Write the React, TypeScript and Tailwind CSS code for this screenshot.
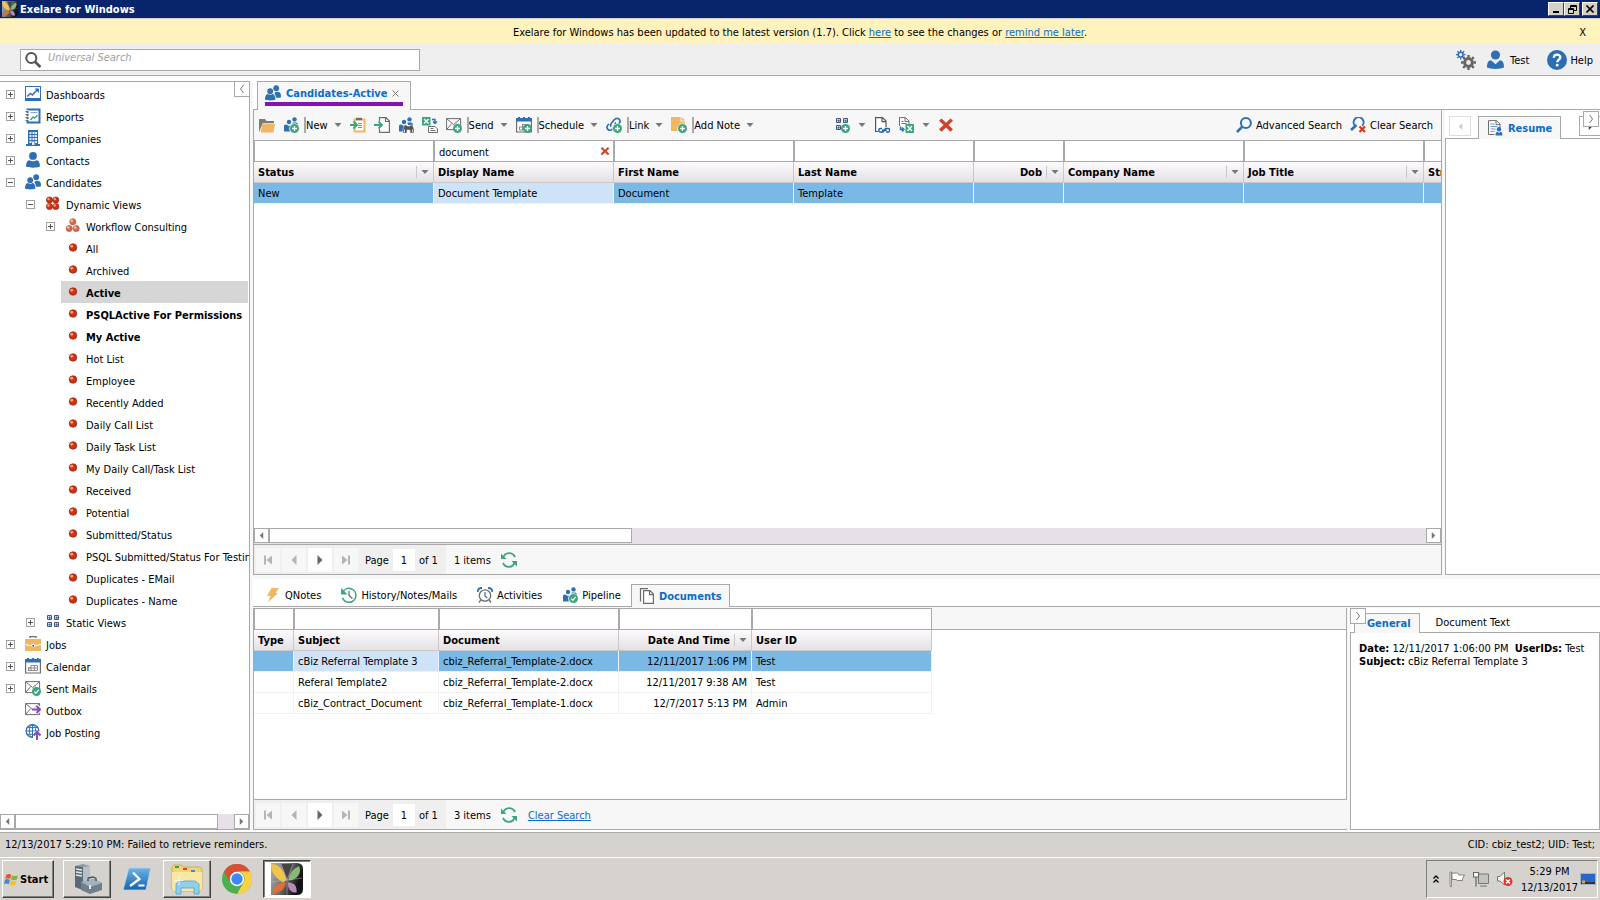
import { useState } from "react";
import type { ReactNode } from "react";
import clsx from "clsx";

const BLUE = "#2f6fb3";
const GREEN = "#3ba57c";
const GRAY = "#6d6d6d";
const ORANGE = "#f0b763";
const PURPLE = "#8a4bab";

const Svg = ({ children, className = "size-4", box = "0 0 16 16" }: { children: ReactNode; className?: string; box?: string }) => (
  <svg viewBox={box} className={clsx("shrink-0", className)} fill="none" aria-hidden="true">
    {children}
  </svg>
);

// small green badge used by the "add" icons
const PlusBadge = () => (
  <>
    <circle cx="11.5" cy="11.5" r="4.5" fill={GREEN} />
    <path d="M11.5 9v5M9 11.5h5" stroke="#fff" strokeWidth="1.3" />
  </>
);

const CheckBadge = () => (
  <>
    <circle cx="11.5" cy="11.5" r="4.5" fill={GREEN} />
    <path d="M9.3 11.6l1.6 1.7 2.8-3.4" stroke="#fff" strokeWidth="1.3" />
  </>
);

const People = ({ className }: { className?: string }) => (
  <Svg className={className}>
    <circle cx="11.2" cy="3.2" r="2.9" fill={BLUE} />
    <path d="M9.5 8.2c.6-1.6 4-1.8 5.3-.6 1 .9 1.2 2.4 1.2 4.6-1.5.7-3.5.7-5 .4-.2-1.8-.8-3-1.5-4.4z" fill={BLUE} />
    <circle cx="5.2" cy="6.2" r="2.9" fill={BLUE} />
    <path d="M0 14.6c0-3.4 1-5.3 2.6-5.6 1.6 1.1 3.6 1.1 5.2 0C9.4 9.3 10.4 11.2 10.4 14.6 8 15.8 2.4 15.8 0 14.6z" fill={BLUE} />
  </Svg>
);

const SmallPeople = () => (
  <>
    <circle cx="11.5" cy="2.4" r="2.2" fill={BLUE} />
    <circle cx="6" cy="5" r="2.2" fill={BLUE} />
    <path d="M9.5 5.6h3.5c1.3.2 2 .9 2 2.4H9.9zM1 14.5V9.9c.2-1.5 1-2.2 2.2-2.2L6 9l1.5-.8v6.3z" fill={BLUE} />
    <circle cx="2.9" cy="9.5" r="1.9" fill={BLUE} />
  </>
);

const PeoplePlus = () => (
  <Svg>
    <SmallPeople />
    <circle cx="11.5" cy="11.5" r="5.3" fill="#f7f7f7" />
    <PlusBadge />
  </Svg>
);

const Pipeline = () => (
  <Svg>
    <SmallPeople />
    <circle cx="11.5" cy="11.5" r="5.3" fill="#fff" />
    <CheckBadge />
  </Svg>
);

const PeopleFind = () => (
  <Svg>
    <SmallPeople />
    <path d="M5 16v-4l1.5-4h2.5v1h3V8h2.5L16 12v4h-4v-3H9v3z" fill="#555" stroke="#f7f7f7" strokeWidth=".5" />
    <path d="M6.5 12.5v2.5M14.5 12.5v2.5" stroke="#ddd" />
  </Svg>
);

const Dashboard = () => (
  <Svg>
    <rect x=".5" y=".5" width="15" height="14" stroke={BLUE} />
    <path d="M0 13.5h16" stroke={BLUE} strokeWidth="3" />
    <path d="M2 10.5l3.5-3 2 1.5 5-5.5" stroke={BLUE} strokeWidth="1.5" />
    <path d="M9.5 2.5H14V7z" fill={BLUE} />
  </Svg>
);

const Report = () => (
  <Svg>
    <path d="M2.5 1.5h12v13h-12z" stroke={BLUE} strokeWidth="2" />
    <path d="M1 3h3M1 6h3M1 9h3M1 12h3" stroke="#fff" strokeWidth="1.5" />
    <path d="M.5 3.5h3M.5 6.5h3M.5 9.5h3M.5 12.5h3" stroke={GRAY} />
    <path d="M5.5 4.5h7" stroke="#8aa9cc" />
    <path d="M5.5 12l2.5-3 1.5 1 3-3" stroke={GREEN} strokeWidth="1.4" />
  </Svg>
);

const Building = () => (
  <Svg>
    <path d="M3 0h10v14h2v2H1v-2h2z" fill={BLUE} />
    <path d="M4.5 2h2v2h-2zM7.5 2h2v2h-2zM10 2h2v2h-2zM4.5 5h2v2h-2zM7.5 5h2v2h-2zM10 5h2v2h-2zM4.5 8h2v2h-2zM7.5 8h2v2h-2zM10 8h2v2h-2zM4.5 11h2v2h-2zM7 11.5h2.5V15H7zM10 11h2v2h-2z" fill="#e6eef8" />
  </Svg>
);

const Person = ({ className }: { className?: string }) => (
  <Svg className={className}>
    <circle cx="8" cy="3.9" r="3.9" fill={BLUE} />
    <path d="M1 14.5c0-3.5 1-6 3.3-6.3C6.5 9.6 9.5 9.6 11.7 8.2 14 8.5 15 11 15 14.5c-3 1.6-11 1.6-14 0z" fill={BLUE} />
  </Svg>
);

const User = () => (
  <Svg className="h-5 w-[17px]" box="0 0 17 20">
    <circle cx="8.5" cy="5" r="4.6" fill={BLUE} />
    <path d="M0 17.5C0 12.5 1.5 10.5 4 10.3l4.5 4 4.5-4c2.5.2 4 2.2 4 7.2-3.5 1.9-13.5 1.9-17 0z" fill={BLUE} />
  </Svg>
);

const Ball = ({ x, y, r, soft }: { x: number; y: number; r: number; soft?: boolean }) => (
  <>
    <circle cx={x} cy={y} r={r} fill={soft ? "#d9694c" : "#d2300f"} stroke={soft ? "#a8503c" : "#7d1f10"} strokeWidth=".6" />
    <circle cx={x - r / 3} cy={y - r / 3} r={r / 2.6} fill={soft ? "#f6c4b4" : "#ff9c80"} />
  </>
);

const Dynamic = () => (
  <Svg>
    <Ball x={4.5} y={4} r={3.1} />
    <Ball x={10.8} y={4} r={3.1} />
    <Ball x={4.5} y={10.5} r={3.1} />
    <Ball x={10.8} y={10.5} r={3.1} />
  </Svg>
);

const Workflow = () => (
  <Svg>
    <Ball x={7.8} y={3.8} r={3.1} soft />
    <Ball x={4.2} y={10.5} r={3.1} soft />
    <Ball x={11.2} y={10.5} r={3.1} soft />
  </Svg>
);

const Leaf = () => (
  <Svg>
    <Ball x={8} y={7.5} r={3.8} />
  </Svg>
);

const Squares = () => (
  <>
    <path d="M2.5 1.5h4v4h-4zM9.5 1.5h4v4h-4zM2.5 8.5h4v4h-4zM9.5 8.5h4v4h-4z" fill="#fff" stroke="#4b5563" />
    <path d="M3.8 2.8h1.6v1.6H3.8zM10.8 2.8h1.6v1.6h-1.6zM3.8 9.8h1.6v1.6H3.8zM10.8 9.8h1.6v1.6h-1.6z" fill="#2563d8" stroke="#2563d8" strokeWidth=".5" />
  </>
);

const Static = () => (
  <Svg>
    <Squares />
  </Svg>
);

const SquaresPlus = () => (
  <Svg>
    <Squares />
    <PlusBadge />
  </Svg>
);

const Briefcase = () => (
  <Svg>
    <path d="M5 2V.7h6V2" stroke={GRAY} strokeWidth="1.3" />
    <path d="M0 3h16v12H0z" fill={ORANGE} />
    <path d="M0 8.5l5.5 1h5l5.5-1" stroke="#fff" />
    <path d="M6.5 8h3v3h-3z" fill="#fff" />
    <path d="M7.5 9h1.5v1.5H7.5z" fill="#333" />
  </Svg>
);

const CalendarBody = () => (
  <>
    <path d="M.6 3v12h14.8V3" fill="#fff" stroke={GRAY} strokeWidth="1.2" />
    <path d="M0 1h2V0h2v1h3V0h2v1h3V0h2v1h2v3.5H0z" fill={BLUE} />
  </>
);

const Calendar = () => (
  <Svg>
    <CalendarBody />
    <path d="M3 10h3M3 12.5h9.5V7.5H6v5M9.3 7.5v5M3.5 10v2.5M3 10h9.5" stroke="#8a8a8a" />
  </Svg>
);

const Schedule = () => (
  <Svg>
    <CalendarBody />
    <path d="M3 10h9M3.5 13h4M3.5 10v3M6.5 7.5V13M6 7.5h6" stroke="#8a8a8a" />
    <PlusBadge />
  </Svg>
);

const EnvelopeBody = () => (
  <path d="M.6 1.6h14v11H.6zM.6 1.6l7 6 7-6M.6 12.6l5-6M14.6 12.6l-4.5-6" fill="#fff" stroke={GRAY} />
);

const SentMail = () => (
  <Svg>
    <EnvelopeBody />
    <CheckBadge />
  </Svg>
);

const MailPlus = () => (
  <Svg>
    <EnvelopeBody />
    <PlusBadge />
  </Svg>
);

const Outbox = () => (
  <Svg>
    <EnvelopeBody />
    <path d="M7 7.5h8M11.5 4l3.5 3.5-3.5 3.5" stroke="#fff" strokeWidth="4" />
    <path d="M7 7.5h8M11.5 4l3.5 3.5-3.5 3.5" stroke={PURPLE} strokeWidth="2" />
  </Svg>
);

const JobPosting = () => (
  <Svg>
    <circle cx="7.5" cy="7" r="6.4" stroke={BLUE} strokeWidth="1.3" />
    <path d="M7.5.6v13M1 7h13M2 3.6h11M2 10.3h11" stroke={BLUE} />
    <ellipse cx="7.5" cy="7" rx="3.2" ry="6.4" stroke={BLUE} />
    <path d="M8 7.5h8V16H8z" fill="#fff" />
    <path d="M12 16V8M8.5 11.5L12 8l3.5 3.5" stroke={PURPLE} strokeWidth="2" />
  </Svg>
);

const Folder = () => (
  <Svg>
    <path d="M0 15V2h6l1.5 2H15v2H4z" fill="#7b7b7b" />
    <path d="M3.500 6.500H16l-1.500 9H1.500z" fill={ORANGE} />
  </Svg>
);

const ClipboardIn = () => (
  <Svg>
    <path d="M3.5 1.5h12v14h-12z" fill={ORANGE} />
    <path d="M5.5 3.5h8v10h-8z" fill="#fff" />
    <path d="M6 .8h6v2.4H6z" fill={GRAY} />
    <path d="M8 6.5h4M8 8.5h4M8 10.5h4" stroke="#8a8a8a" />
    <path d="M0 8h6M3.5 4.5L7 8l-3.5 3.5" stroke={GREEN} strokeWidth="1.8" />
  </Svg>
);

const DocIn = () => (
  <Svg>
    <path d="M5.5 4V.6H12L15.4 4v11.4H5.5V12M11.5.6V4.5h3.9" fill="#fff" stroke={GRAY} strokeWidth="1.2" />
    <path d="M0 8h7M4.5 4.5L8 8l-3.5 3.5" stroke={GREEN} strokeWidth="1.8" />
  </Svg>
);

const ExcelExport = () => (
  <Svg>
    <path d="M0 0h8.500v8.500H0z" fill={GREEN} />
    <path d="M2 2l4.500 4.500M6.500 2L2 6.500" stroke="#fff" strokeWidth="1.4" />
    <path d="M10 2.500h3v3.500M11 4.500l2 2 2-2" stroke={BLUE} strokeWidth="1.4" />
    <path d="M6.500 15.500V9.500H13l2.500 2.500v3.500zM8.500 11.500h3M8.500 13.500h5" fill="#fff" stroke={GRAY} />
  </Svg>
);

const LinkPlus = () => (
  <Svg>
    <path d="M5 9.5c-1-1.8 0-3 1-4l2-2.5C10 .6 12.5 1 13.5 2.5s.5 3-.5 4l-1 1M9 5.5c1 1.5.5 3-.5 4L6.5 12C5 13.8 2.5 13.5 1.5 12s-.5-3 .5-4l1-1" stroke={BLUE} strokeWidth="1.7" />
    <circle cx="11.5" cy="11.5" r="5.2" fill="#f7f7f7" />
    <PlusBadge />
  </Svg>
);

const NotePlus = () => (
  <Svg>
    <path d="M0 0h9.500v4.500H14V14H0z" fill={ORANGE} />
    <path d="M10.500 0L14 3.500h-3.500z" fill={ORANGE} />
    <circle cx="11.500" cy="11.500" r="5.200" fill="#f7f7f7" />
    <PlusBadge />
  </Svg>
);

const DocLink = () => (
  <Svg>
    <path d="M4 14.5H1.6V.6h6.9L12 4v6M8 .6v4h4" fill="#fff" stroke="#555" strokeWidth="1.2" />
    <path d="M8 11.5H6.5a1.7 1.7 0 000 3.5H9l2.5-3.5H14a1.7 1.7 0 010 3.5h-2M8 13.3h4.5" stroke="#1c5fa8" strokeWidth="1.4" />
  </Svg>
);

const DocExcel = () => (
  <Svg>
    <path d="M1.5 9V.6h6L11 4v3M7 .6v4h4M3.5 4.5h2M3.5 6.5h5" fill="#fff" stroke={GRAY} />
    <path d="M2.5 9.5v3H5M4 10.5l2 2-2 2" stroke={BLUE} strokeWidth="1.4" />
    <path d="M7.5 7H16v9H7.5z" fill={GREEN} />
    <path d="M9.5 9l4.5 5M14 9l-4.5 5" stroke="#fff" strokeWidth="1.5" />
  </Svg>
);

const RedX = ({ className = "size-4" }: { className?: string }) => (
  <Svg className={className}>
    <path d="M3.5 1.5L8 5.8l4.5-4.3L15 3.8 10.500 8l4.500 4.300-2.500 2.500L8 10.400l-4.500 4.400L1 12.300 5.500 8 1 3.800z" fill="#d0432b" />
  </Svg>
);

const SearchBlue = () => (
  <Svg>
    <circle cx="9.9" cy="6" r="5" stroke={BLUE} strokeWidth="2" />
    <path d="M6.3 9.7L1 15" stroke={BLUE} strokeWidth="2.6" />
  </Svg>
);

const ClearSearch = () => (
  <Svg>
    <path d="M5 8.800A5 5 0 1112.200 8.800" stroke={BLUE} strokeWidth="2" />
    <path d="M6.500 8L1 13" stroke={BLUE} strokeWidth="2.600" />
    <path d="M9.500 9.500l5.500 5.500M15 9.500L9.500 15" stroke="#cf3c25" strokeWidth="2.200" />
  </Svg>
);

const Resume = () => (
  <Svg>
    <path d="M1.5.6h8L13 4v4M9 .6v4h4M1.5.6v13.9h6" fill="#fff" stroke={GRAY} />
    <path d="M3.5 4h4M3.5 6.5h7M3.5 9h5M3.5 11.500h4" stroke="#6f9ed0" strokeWidth="1.2" />
    <circle cx="12" cy="9.2" r="2.2" fill={BLUE} />
    <path d="M8.5 15.500c0-2.500.8-3.700 2-3.800L12 13l1.500-1.300c1.200.1 2 1.300 2 3.800z" fill={BLUE} />
  </Svg>
);

const Bolt = () => (
  <Svg>
    <path d="M6.500 1H14l-3.500 5H13L3 15.500l2.500-6.500H2z" fill={ORANGE} />
  </Svg>
);

const History = () => (
  <Svg>
    <path d="M1.8 5.2A6.9 6.9 0 118 15.2a7 7 0 01-6.5-4.5" stroke={GREEN} strokeWidth="1.6" />
    <path d="M0 1v6.5h6.5z" fill={GREEN} />
    <path d="M8 4v4.5l3.5 3" stroke={GRAY} strokeWidth="1.3" />
  </Svg>
);

const Alarm = () => (
  <Svg>
    <circle cx="8" cy="8.5" r="5.7" stroke={GRAY} strokeWidth="1.3" fill="#fff" />
    <path d="M8 5v4l2.2 2.2" stroke={BLUE} strokeWidth="1.2" />
    <path d="M3.8 13L2 15.5M12.2 13l1.800 2.500" stroke={GRAY} strokeWidth="1.3" />
    <path d="M.7 5C.5 2.500 2.300.9 5 1M15.300 5C15.500 2.500 13.700.9 11 1" stroke={BLUE} strokeWidth="1.8" />
  </Svg>
);

const Docs = () => (
  <Svg>
    <path d="M1.5 13.5V.6H9" stroke={GRAY} strokeWidth="1.2" />
    <path d="M4.6 15.4V2.6H11l3.400 3.400v9.400zM10.500 2.600v4h3.900" fill="#fff" stroke={GRAY} strokeWidth="1.2" />
  </Svg>
);

const Refresh = () => (
  <Svg>
    <path d="M2 6.5C2.8 3 5.3 1.2 8 1.2c2.8 0 5 1.500 6 4M14 9.500c-.8 3.500-3.300 5.300-6 5.300-2.800 0-5-1.500-6-4" stroke={GREEN} strokeWidth="1.8" />
    <path d="M0 1.5V7h5.500zM16 14.500V9h-5.500z" fill={GREEN} />
  </Svg>
);

const Gears = () => (
  <Svg className="size-5" box="0 0 20 20">
    <circle cx="12.5" cy="12.5" r="3.9" stroke="#666" strokeWidth="3" />
    <path d="M12.5 5v2.5M12.5 17.5V20M5 12.5h2.5M17.5 12.5H20M7.2 7.2L9 9M16 16l1.8 1.8M7.2 17.8L9 16M16 9l1.8-1.8" stroke="#666" strokeWidth="2.4" />
    <circle cx="4.7" cy="4.7" r="2.4" stroke={BLUE} strokeWidth="1.5" />
    <path d="M4.7 0v2M4.7 7.5v2M0 4.7h2M7.5 4.7h2M1.3 1.3l1.2 1.2M6.9 6.9l1.2 1.2M1.3 8.1l1.2-1.2M6.9 2.5l1.2-1.2" stroke={BLUE} strokeWidth="1.3" />
  </Svg>
);

const Help = () => (
  <Svg className="size-5" box="0 0 20 20">
    <circle cx="10" cy="10" r="10" fill="#2b6fb2" />
    <path d="M6.8 7.8C6.8 3.6 13.4 3.8 13.4 7.3 13.4 9.6 10.2 9.6 10.2 12.3" stroke="#fff" strokeWidth="2.3" />
    <circle cx="10.2" cy="15.2" r="1.4" fill="#fff" />
  </Svg>
);

const Butterfly = ({ className }: { className?: string }) => (
  <Svg className={className} box="0 0 32 32">
    <defs>
      <linearGradient id="bfly" x1="0" y1=".3" x2="1" y2=".7">
        <stop offset="0" stopColor="#a8a8a8" />
        <stop offset=".45" stopColor="#6b6b6b" />
        <stop offset=".85" stopColor="#141414" />
      </linearGradient>
    </defs>
    <path d="M0 0h26q6 0 6 6v20q0 6-6 6H0z" fill="url(#bfly)" />
    <path d="M10 1h12l-5.500 15z" fill="#444" />
    <path d="M0 1c8 0 13 6 15.500 16L12 19.500C4 15 0 9 0 1z" fill="#efc64a" />
    <path d="M28 3c3 6-1 14-10.500 14.500C18 10 22 6 28 3z" fill="#86b877" />
    <path d="M14.500 19c.5 6-5 11-13.500 12C2 25 7 19 14.500 19z" fill="#dc7038" />
    <path d="M17 19.500c5-.5 9.500 3 8.500 10-5 .5-9-3-8.500-10z" fill="#b88abb" />
    <path d="M10 1l6 16 6-16M16 17v15M16 17l15-2M16 17L0 19" stroke="#bdbdbd" strokeWidth=".5" />
  </Svg>
);

const WindowsFlag = () => (
  <Svg className="size-[15px]">
    <path d="M2.5 3C4.5 1.6 6 2 7.7 3L6.5 7.5C5 6.5 3.2 6.2 1.3 7.5z" fill="#e8532b" />
    <path d="M8.5 3.4c2 1.2 4 1.2 6.5 0L13.7 8c-2 1-4 1.2-6.3 0z" fill="#7dbb3c" />
    <path d="M1 8.4c1.8-1.2 3.5-1 5.2.1L5 13C3.5 12 1.8 11.7 0 13z" fill="#3f86dc" />
    <path d="M7.1 9c2 1 4 1.1 6.3 0l-1.2 4.5c-2.2 1.1-4.2 1-6.3-.1z" fill="#f5c02c" />
  </Svg>
);

const Server = () => (
  <Svg className="size-8" box="0 0 32 32">
    <path d="M4 3l8-2 7 2v22l-7 2-8-3z" fill="#8d9aa5" />
    <path d="M4 3l8 1v23l-8-3z" fill="#5d6a75" />
    <path d="M5 6l6 1M5 9l6 1M5 12l6 1" stroke="#dfe6ec" strokeWidth="1.3" />
    <path d="M12 4l7-1v22l-7 2z" fill="#b6c0c8" />
    <path d="M10 19l13-3 8 4v7l-12 4-9-4z" fill="#6f7f8d" />
    <path d="M10 19l13-3 8 4-12 4z" fill="#a4b1bc" />
    <path d="M17 18v-3l5-1 3 1.5V18" stroke="#44505a" strokeWidth="1.3" />
    <path d="M19 22v4" stroke="#e5eaee" strokeWidth="2" />
  </Svg>
);

const PowerShell = () => (
  <Svg className="size-7" box="0 0 28 28">
    <defs>
      <linearGradient id="ps" x1="0" y1="0" x2="0" y2="1">
        <stop offset="0" stopColor="#6fb2e6" />
        <stop offset="1" stopColor="#1564b0" />
      </linearGradient>
    </defs>
    <path d="M7 3h19.5a1 1 0 011 1.2l-4.3 19.6a1.5 1.5 0 01-1.5 1.2H1.5a1 1 0 01-1-1.3L5.5 4.2A1.5 1.5 0 017 3z" fill="url(#ps)" stroke="#b7d8f2" strokeWidth=".7" />
    <path d="M10 7.5l6.5 6.5L7 21M15.5 20.500h6" stroke="#fff" strokeWidth="2.2" />
  </Svg>
);

const Explorer = () => (
  <Svg className="size-8" box="0 0 32 32">
    <path d="M1 4l2-2h8l2 2h16l2 2v20l-2 2H3l-2-2z" fill="#f2d572" stroke="#c79d2e" strokeWidth=".7" />
    <path d="M4 3h4v2H4z" fill="#3aa33f" />
    <path d="M12 5h4v2h-4z" fill="#d8452f" />
    <path d="M20 7h4v2h-4z" fill="#3b87d8" />
    <path d="M1 9h30v17l-2 2H3l-2-2z" fill="#f9e7a3" />
    <path d="M5 31V21l3-3h16l4 3v10h-5v-6H10v6z" fill="#8fd0ee" stroke="#4ea3d0" strokeWidth=".8" />
    <path d="M8 13v9M3.5 17.5h9" stroke="#fff" strokeWidth=".8" />
  </Svg>
);

const Chrome = () => (
  <Svg className="size-[30px]" box="0 0 30 30">
    <circle cx="15" cy="15" r="15" fill="#4caf50" />
    <path d="M2 7.5A15 15 0 0128 7.5H15a7.5 7.5 0 00-6.500 11.200z" fill="#dd4b39" />
    <path d="M28 7.500A15 15 0 0115 30l6.500-11.200A7.500 7.500 0 0015 7.500z" fill="#fcd144" />
    <circle cx="15" cy="15" r="7.2" fill="#fff" />
    <circle cx="15" cy="15" r="5.7" fill="#4285f4" />
  </Svg>
);

const TrayFlag = () => (
  <Svg>
    <path d="M1 1h1.500v14.500H1z" fill="#eee" stroke="#777" strokeWidth=".8" />
    <path d="M3 2h5.500l1.500 2h5.500l-2 3.500v2H8.500L7 8.500H3z" fill="#fff" stroke="#777" strokeWidth=".9" />
  </Svg>
);

const TrayNetwork = () => (
  <Svg>
    <path d="M5.5 3h10v9.5h-10z" fill="#c3c3c3" stroke="#777" />
    <path d="M7 15h7" stroke="#777" />
    <path d="M.5 1.5h5V6H.5zM3 6v9.5" fill="#fff" stroke="#666" strokeWidth="1.2" />
  </Svg>
);

const TraySpeaker = () => (
  <Svg>
    <path d="M.5 5.500H3L7.500 1v13L3 10H.5z" fill="#f3f3f3" stroke="#777" />
    <circle cx="11" cy="10.5" r="4.5" fill="#e0352b" />
    <path d="M9 8.5l4 4M13 8.5l-4 4" stroke="#fff" strokeWidth="1.4" />
  </Svg>
);

const ShowDesktop = () => (
  <Svg>
    <path d="M0 2h16v12H0z" fill="#9fb4cf" />
    <path d="M1 3h14v8H1z" fill="#2a67c9" />
    <path d="M1 11h14v2H1z" fill="#333" />
    <path d="M2 9.5h3v3H2z" fill="#f0a030" />
  </Svg>
);

const Arrow = ({ dir, className }: { dir: "left" | "right" | "down"; className?: string }) => (
  <svg viewBox="0 0 8 8" className={clsx("size-2 shrink-0", className)} fill="currentColor" aria-hidden="true">
    {dir === "left" && <path d="M6 0v8L2 4z" />}
    {dir === "right" && <path d="M2 0v8l4-4z" />}
    {dir === "down" && <path d="M.5 2h7L4 6z" />}
  </svg>
);

const EndArrow = ({ last }: { last?: boolean }) => (
  <svg viewBox="0 0 10 10" className="size-[10px]" fill="currentColor" aria-hidden="true">
    {last ? <path d="M1 .5v9L6.500 5zM7 .5h2v9H7z" /> : <path d="M9 .5v9L3.500 5zM1 .5h2v9H1z" />}
  </svg>
);

type Node = { label: string; level: number; icon: () => ReactNode; state?: "open" | "closed"; bold?: boolean };

const leaf = (label: string, bold = false): Node => ({ label, level: 2, icon: Leaf, bold });

const tree: Node[] = [
  { label: "Dashboards", level: 0, icon: Dashboard, state: "closed" },
  { label: "Reports", level: 0, icon: Report, state: "closed" },
  { label: "Companies", level: 0, icon: Building, state: "closed" },
  { label: "Contacts", level: 0, icon: () => <Person />, state: "closed" },
  { label: "Candidates", level: 0, icon: () => <People />, state: "open" },
  { label: "Dynamic Views", level: 1, icon: Dynamic, state: "open" },
  { label: "Workflow Consulting", level: 2, icon: Workflow, state: "closed" },
  leaf("All"),
  leaf("Archived"),
  leaf("Active", true),
  leaf("PSQLActive For Permissions", true),
  leaf("My Active", true),
  leaf("Hot List"),
  leaf("Employee"),
  leaf("Recently Added"),
  leaf("Daily Call List"),
  leaf("Daily Task List"),
  leaf("My Daily Call/Task List"),
  leaf("Received"),
  leaf("Potential"),
  leaf("Submitted/Status"),
  leaf("PSQL Submitted/Status For Testing"),
  leaf("Duplicates - EMail"),
  leaf("Duplicates - Name"),
  { label: "Static Views", level: 1, icon: Static, state: "closed" },
  { label: "Jobs", level: 0, icon: Briefcase, state: "closed" },
  { label: "Calendar", level: 0, icon: Calendar, state: "closed" },
  { label: "Sent Mails", level: 0, icon: SentMail, state: "closed" },
  { label: "Outbox", level: 0, icon: Outbox },
  { label: "Job Posting", level: 0, icon: JobPosting },
];

const indents = ["pl-0", "pl-5", "pl-10"];

const TreeRow = ({ node, active, onSelect }: { node: Node; active: boolean; onSelect: () => void }) => (
  <li className={clsx("flex h-[22px] items-center", indents[node.level])}>
    <span className="flex w-[21px] shrink-0 pl-[6px]">
      {node.state && (
        <button aria-label={`Toggle ${node.label}`} className="flex size-[9px] items-center justify-center border border-[#a0a0a0] bg-white text-[#555]">
          <svg viewBox="0 0 5 5" className="size-[5px]" stroke="currentColor" aria-hidden="true">
            <path d={node.state === "open" ? "M0 2.5h5" : "M0 2.5h5M2.5 0v5"} />
          </svg>
        </button>
      )}
    </span>
    <a
      href="#"
      onClick={onSelect}
      className={clsx("flex h-full flex-1 items-center gap-[5px] pl-1 whitespace-nowrap", node.bold && "font-bold", active && "bg-[#d6d6d6]")}
    >
      {node.icon()}
      <span className="pt-1">{node.label}</span>
    </a>
  </li>
);

const HScroll = ({ thumb }: { thumb: string }) => (
  <div className="flex h-[15px] shrink-0 bg-[#e6e1e6]">
    <button aria-label="Scroll left" className="flex w-[15px] items-center justify-center border border-[#a9a9a9] bg-white text-[#777]">
      <Arrow dir="left" className="size-[7px]" />
    </button>
    <div className={clsx("border border-[#a9a9a9] bg-white", thumb)} />
    <div className="flex-1" />
    <button aria-label="Scroll right" className="flex w-[15px] items-center justify-center border border-[#a9a9a9] bg-white text-[#777]">
      <Arrow dir="right" className="size-[7px]" />
    </button>
  </div>
);

const Sidebar = () => {
  const [active, setActive] = useState("Active");

  return (
    <aside className="relative flex w-[250px] shrink-0 flex-col border-t border-r border-b border-[#a9a9a9] bg-white">
      <ul className="min-h-0 flex-1 overflow-hidden pt-px pr-px">
        {tree.map((node) => (
          <TreeRow key={node.label} node={node} active={active === node.label} onSelect={() => setActive(node.label)} />
        ))}
      </ul>
      <HScroll thumb="w-[203px]" />
      <button aria-label="Collapse sidebar" className="absolute -top-px -right-px flex size-4 items-center justify-center border border-[#a9a9a9] bg-white text-[#777]">
        <svg viewBox="0 0 8 8" className="size-2" fill="none" stroke="currentColor" aria-hidden="true">
          <path d="M5.5 0l-3 4 3 4" />
        </svg>
      </button>
    </aside>
  );
};

const ToolButton = ({ label, children }: { label: string; children: ReactNode }) => (
  <button aria-label={label} title={label}>
    {children}
  </button>
);

// icon + divider + label + drop-down arrow
const SplitButton = ({ icon, label }: { icon: ReactNode; label: string }) => (
  <button className="flex items-center">
    {icon}
    <span className="ml-[5px] h-4 w-0.5 bg-[#a9a9a9]" />
    <span className="mr-[6px] pt-0.5">{label}</span>
    <Arrow dir="down" className="text-[#777]" />
  </button>
);

const Toolbar = () => (
  <div className="flex h-[30px] shrink-0 items-center bg-[#f7f7f7] pr-2 pl-[5px] whitespace-nowrap">
    <div className="flex items-center gap-2">
      <ToolButton label="Open"><Folder /></ToolButton>
      <SplitButton icon={<PeoplePlus />} label="New" />
      <ToolButton label="Paste resume"><ClipboardIn /></ToolButton>
      <ToolButton label="Import file"><DocIn /></ToolButton>
      <ToolButton label="Find duplicates"><PeopleFind /></ToolButton>
      <ToolButton label="Export to Excel"><ExcelExport /></ToolButton>
      <SplitButton icon={<MailPlus />} label="Send" />
      <SplitButton icon={<Schedule />} label="Schedule" />
      <SplitButton icon={<LinkPlus />} label="Link" />
      <SplitButton icon={<NotePlus />} label="Add Note" />
    </div>
    <div className="ml-20 flex items-center gap-2">
      <button aria-label="Views" className="flex items-center gap-2">
        <SquaresPlus />
        <Arrow dir="down" className="text-[#777]" />
      </button>
      <ToolButton label="Link document"><DocLink /></ToolButton>
      <button aria-label="Export document" className="flex items-center gap-2">
        <DocExcel />
        <Arrow dir="down" className="text-[#777]" />
      </button>
      <ToolButton label="Delete"><RedX /></ToolButton>
    </div>
    <div className="ml-auto flex items-center gap-2">
      <button className="flex items-center gap-1">
        <SearchBlue />
        <span className="pt-0.5">Advanced Search</span>
      </button>
      <button className="flex items-center gap-1">
        <ClearSearch />
        <span className="pt-0.5">Clear Search</span>
      </button>
    </div>
  </div>
);

type Column = { name: string; width: string; sort?: boolean; right?: boolean; filter?: string };

const candidateColumns: Column[] = [
  { name: "Status", width: "w-[180px]", sort: true },
  { name: "Display Name", width: "w-[180px]", filter: "document" },
  { name: "First Name", width: "w-[180px]" },
  { name: "Last Name", width: "w-[180px]" },
  { name: "Dob", width: "w-[90px]", sort: true, right: true },
  { name: "Company Name", width: "w-[180px]", sort: true },
  { name: "Job Title", width: "w-[180px]", sort: true },
  { name: "Street", width: "w-[180px]", sort: true },
];

const candidateRows = [["New", "Document Template", "Document", "Template", "", "", "", ""]];

const documentColumns: Column[] = [
  { name: "Type", width: "w-[40px]" },
  { name: "Subject", width: "w-[145px]" },
  { name: "Document", width: "w-[180px]" },
  { name: "Date And Time", width: "w-[133px]", sort: true, right: true },
  { name: "User ID", width: "w-[180px]" },
];

const documentRows = [
  ["", "cBiz Referral Template 3", "cbiz_Referral_Template-2.docx", "12/11/2017 1:06 PM", "Test"],
  ["", "Referal Template2", "cbiz_Referral_Template-2.docx", "12/11/2017 9:38 AM", "Test"],
  ["", "cBiz_Contract_Document", "cbiz_Referral_Template-1.docx", "12/7/2017 5:13 PM", "Admin"],
];

const Grid = ({ columns, rows, filler }: { columns: Column[]; rows: string[][]; filler?: boolean }) => (
  <table className={clsx("table-fixed border-separate border-spacing-0", filler ? "w-full" : "w-[1350px]")}>
    <colgroup>
      {columns.map((c) => <col key={c.name} className={c.width} />)}
      {filler && <col />}
    </colgroup>
    <thead>
      <tr className="h-[22px]">
        {columns.map((c) => (
          <td key={c.name} className="p-0">
            <div className="relative">
              <input
                aria-label={`Filter ${c.name}`}
                defaultValue={c.filter}
                className="block h-[22px] w-full border border-[#a9a9a9] bg-white px-1 pt-0.5 outline-none"
              />
              {c.filter && (
                <button aria-label={`Clear ${c.name} filter`} className="absolute top-[6px] right-1">
                  <RedX className="size-[10px]" />
                </button>
              )}
            </div>
          </td>
        ))}
        {filler && <td className="border-b border-[#a9a9a9] bg-[#f7f7f7] p-0" />}
      </tr>
      <tr className="h-[21px]">
        {columns.map((c) => (
          <th key={c.name} scope="col" className="border-r border-b border-[#c9c7c9] bg-linear-to-b from-[#fdfbfd] to-[#e4e1e4] p-0 font-bold">
            <div className={clsx("flex items-center pl-1 whitespace-nowrap", c.right ? "justify-end" : "justify-between")}>
              <span className="pt-0.5">{c.name}</span>
              {c.sort && (
                <span className="ml-1 flex h-3 w-[17px] items-center border-l border-[#c9c7c9] pl-1">
                  <Arrow dir="down" className="text-[#777]" />
                </span>
              )}
            </div>
          </th>
        ))}
      </tr>
    </thead>
    <tbody>
      {rows.map((row, i) => (
        <tr key={i} className="h-[21px]">
          {row.map((cell, j) => (
            <td
              key={j}
              className={clsx(
                "border-r border-b border-[#f3f0f3] px-1 pt-0.5 pb-0 whitespace-nowrap",
                columns[j].right && "text-right",
                i === 0 && (j === 1 ? "bg-[#cfe3f8]" : "bg-[#7ab8e6]")
              )}
            >
              {cell}
            </td>
          ))}
        </tr>
      ))}
    </tbody>
  </table>
);

const pagerButton = "flex size-6 items-center justify-center";

const Pager = ({ id, items, children }: { id: string; items: number; children?: ReactNode }) => (
  <div className="flex h-[30px] shrink-0 items-center border-t border-[#a9a9a9] bg-[#f7f7f7] whitespace-nowrap">
    <div className="flex h-full items-center gap-0.5 bg-[#efefef] pr-2 pl-0.5">
      <button aria-label="First page" disabled className={clsx(pagerButton, "bg-[#f7f7f7] text-[#b5b5b5]")}>
        <EndArrow />
      </button>
      <button aria-label="Previous page" disabled className={clsx(pagerButton, "bg-[#f7f7f7] text-[#b5b5b5]")}>
        <Arrow dir="left" className="size-[10px]" />
      </button>
      <button aria-label="Next page" className={clsx(pagerButton, "bg-white text-[#666]")}>
        <Arrow dir="right" className="size-[10px]" />
      </button>
      <button aria-label="Last page" disabled className={clsx(pagerButton, "bg-[#f7f7f7] text-[#b5b5b5]")}>
        <EndArrow last />
      </button>
      <label htmlFor={id} className="mr-0.5 ml-[5px] pt-0.5">Page</label>
      <input id={id} defaultValue="1" className="h-[22px] w-[22px] bg-white pt-0.5 text-center outline-none" />
      <span className="ml-0.5 pt-0.5">of 1</span>
    </div>
    <span className="mr-[10px] ml-2 pt-0.5">{items} items</span>
    <button aria-label="Refresh"><Refresh /></button>
    {children}
  </div>
);

const ResumePanel = () => (
  <aside className="relative ml-[3px] flex w-[155px] shrink-0 flex-col border-b border-[#a9a9a9]">
    <div className="flex h-[29px] shrink-0 items-end bg-white">
      <div className="flex h-full w-[33px] items-center border-b border-[#a9a9a9] pl-1">
        <button aria-label="Previous tab" disabled className="mt-1 flex h-5 w-[22px] items-center justify-center border border-[#ddd] bg-white text-[#ccc]">
          <Arrow dir="left" className="size-[7px]" />
        </button>
      </div>
      <button className="flex h-[23px] items-center gap-[5px] border-t border-r border-l border-[#a9a9a9] bg-[#f7f7f7] px-2 font-bold text-[#0a6dc8]">
        <Resume />
        <span className="pt-0.5">Resume</span>
      </button>
      <div className="flex h-full flex-1 items-center justify-end overflow-hidden border-b border-[#a9a9a9]">
        <button aria-label="Next tab" className="mt-1 flex h-5 w-[21px] shrink-0 items-center justify-center border border-r-0 border-[#a9a9a9] bg-white text-[#333]">
          <Arrow dir="right" className="size-[7px]" />
        </button>
      </div>
    </div>
    <div className="flex-1 border-l border-[#a9a9a9] bg-white" />
    <button aria-label="Collapse resume" className="absolute top-px right-px flex size-4 items-center justify-center border border-[#a9a9a9] bg-white text-[#777]">
      <svg viewBox="0 0 8 8" className="size-2" fill="none" stroke="currentColor" aria-hidden="true">
        <path d="M2.5 0l3 4-3 4" />
      </svg>
    </button>
  </aside>
);

const detailTabs = [
  { label: "QNotes", icon: <Bolt /> },
  { label: "History/Notes/Mails", icon: <History /> },
  { label: "Activities", icon: <Alarm /> },
  { label: "Pipeline", icon: <Pipeline /> },
  { label: "Documents", icon: <Docs /> },
];

const DetailTabs = () => {
  const [tab, setTab] = useState("Documents");

  return (
    <div className="flex h-[28px] shrink-0 items-stretch bg-white whitespace-nowrap">
      <div className="w-0.5 border-b border-[#a9a9a9]" />
      {detailTabs.map((t) => (
        <button
          key={t.label}
          onClick={() => setTab(t.label)}
          className={clsx(
            "flex items-center gap-1 border-[#a9a9a9]",
            tab === t.label ? "mt-[5px] border-t border-r border-l bg-[#f7f7f7] px-[7px] font-bold text-[#0a6dc8]" : "border-b px-[10px] pt-1"
          )}
        >
          {t.icon}
          <span className="pt-0.5">{t.label}</span>
        </button>
      ))}
      <div className="flex-1 border-b border-[#a9a9a9]" />
    </div>
  );
};

const DocumentPanel = () => (
  <aside className="relative ml-[3px] flex w-[250px] shrink-0 flex-col">
    <div className="flex h-[25px] shrink-0 items-end bg-white pt-[5px] whitespace-nowrap">
      <div className="h-full w-1 border-b border-[#a9a9a9]" />
      <button className="h-full border-t border-r border-l border-[#a9a9a9] bg-[#f7f7f7] pr-2 pl-3 font-bold text-[#0a6dc8]">General</button>
      <button className="h-full border-b border-[#a9a9a9] px-4">Document Text</button>
      <div className="h-full flex-1 border-b border-[#a9a9a9]" />
    </div>
    <div className="flex-1 border-r border-b border-l border-[#a9a9a9] bg-white px-2 pt-[9px] leading-[13px] whitespace-nowrap">
      <p>
        <b>Date:</b> 12/11/2017 1:06:00 PM&nbsp; <b>UserIDs:</b> Test
      </p>
      <p>
        <b>Subject:</b> cBiz Referral Template 3
      </p>
    </div>
    <button aria-label="Collapse details" className="absolute top-0 left-0 flex size-4 items-center justify-center border border-[#a9a9a9] bg-white text-[#777]">
      <svg viewBox="0 0 8 8" className="size-2" fill="none" stroke="currentColor" aria-hidden="true">
        <path d="M2.5 0l3 4-3 4" />
      </svg>
    </button>
  </aside>
);

const TitleBar = () => (
  <div className="flex h-[19px] shrink-0 items-center border-b border-[#d4d0c8] bg-[#08246b] pr-0.5 pl-0.5 font-bold text-white">
    <Butterfly className="size-4" />
    <span className="ml-0.5 flex-1 pt-0.5">Exelare for Windows</span>
    <button aria-label="Minimize" className="flex h-[14px] w-4 items-end justify-center border border-t-white border-r-[#404040] border-b-[#404040] border-l-white bg-[#d4d0c8] pb-0.5">
      <span className="h-0.5 w-[6px] bg-black" />
    </button>
    <button aria-label="Restore" className="mr-0.5 flex h-[14px] w-4 items-center justify-center border border-t-white border-r-[#404040] border-b-[#404040] border-l-white bg-[#d4d0c8]">
      <svg viewBox="0 0 9 9" className="size-[9px]" fill="none" stroke="#000" aria-hidden="true">
        <path d="M2.5 3V.5h6v5H6M.5 3.5h5v5h-5zM.5 4.5h5M2.5 1.5h6" />
      </svg>
    </button>
    <button aria-label="Close" className="flex h-[14px] w-4 items-center justify-center border border-t-white border-r-[#404040] border-b-[#404040] border-l-white bg-[#d4d0c8]">
      <svg viewBox="0 0 8 8" className="size-2" stroke="#000" strokeWidth="1.6" aria-hidden="true">
        <path d="M.5.5l7 7M7.5.5l-7 7" />
      </svg>
    </button>
  </div>
);

const UpdateBanner = () => (
  <div className="relative flex h-[25px] shrink-0 items-center justify-center bg-[#fff2bd] pt-0.5">
    <p>
      Exelare for Windows has been updated to the latest version (1.7). Click{" "}
      <a href="#" className="text-[#0a6dc8] underline">here</a> to see the changes or{" "}
      <a href="#" className="text-[#0a6dc8] underline">remind me later</a>.
    </p>
    <button aria-label="Dismiss" className="absolute right-[14px]">X</button>
  </div>
);

const SearchBar = () => (
  <div className="flex h-8 shrink-0 items-center border-b border-[#a9a9a9] bg-[#efefef] pr-[7px] pl-5">
    <label className="flex h-[22px] w-[400px] items-center border border-[#a9a9a9] bg-white pl-1">
      <svg viewBox="0 0 16 16" className="size-4 shrink-0" fill="none" stroke="#555" aria-hidden="true">
        <circle cx="6.3" cy="6" r="5" strokeWidth="2" />
        <path d="M10 9.8l5.300 5.200" strokeWidth="2.6" />
      </svg>
      <input aria-label="Universal Search" placeholder="Universal Search" className="h-full flex-1 pb-1 pl-[7px] italic outline-none placeholder:text-[#a0a0a0]" />
    </label>
    <div className="ml-auto flex items-center">
      <button aria-label="Settings" className="mr-[11px]"><Gears /></button>
      <button className="mr-[18px] flex items-center gap-[6px]">
        <User />
        <span className="pt-0.5">Test</span>
      </button>
      <button className="flex items-center gap-[3px]">
        <Help />
        <span className="pt-0.5">Help</span>
      </button>
    </div>
  </div>
);

const TaskButton = ({ label, pressed, children }: { label: string; pressed?: boolean; children: ReactNode }) => (
  <button
    aria-label={label}
    className={clsx(
      "flex h-[38px] w-12 items-center justify-center border",
      pressed
        ? "border-t-[#404040] border-r-white border-b-white border-l-[#404040] bg-white shadow-[inset_1px_1px_0_#808080]"
        : "border-t-white border-r-[#404040] border-b-[#404040] border-l-white shadow-[inset_-1px_-1px_0_#808080]"
    )}
  >
    {children}
  </button>
);

const Taskbar = () => (
  <footer className="flex h-[43px] shrink-0 items-center border-t border-white bg-[#d6d3ce] pr-0.5 pl-0.5">
    <button className="mr-[9px] flex h-[38px] w-[52px] items-center gap-px border border-t-white border-r-[#404040] border-b-[#404040] border-l-white pl-px font-bold shadow-[inset_-1px_-1px_0_#808080]">
      <WindowsFlag />
      <span className="pt-0.5">Start</span>
    </button>
    <div className="flex items-center gap-0.5">
      <TaskButton label="Server Manager"><Server /></TaskButton>
      <button aria-label="PowerShell" className="flex w-12 justify-center"><PowerShell /></button>
      <TaskButton label="File Explorer"><Explorer /></TaskButton>
      <button aria-label="Chrome" className="flex w-12 justify-center"><Chrome /></button>
      <TaskButton label="Exelare" pressed><Butterfly className="size-8" /></TaskButton>
    </div>
    <div className="ml-auto flex h-[38px] items-center border border-t-[#808080] border-r-white border-b-white border-l-[#808080] pr-px pl-[6px]">
      <svg viewBox="0 0 6 8" className="mr-[10px] h-2 w-[6px]" fill="none" stroke="#000" strokeWidth="1.3" aria-hidden="true">
        <path d="M.5 3.5L3 1l2.500 2.500M.5 7.500L3 5l2.500 2.500" />
      </svg>
      <div className="mr-2 flex gap-2">
        <TrayFlag />
        <TrayNetwork />
        <TraySpeaker />
      </div>
      <div className="mr-0.5 pt-0.5 text-center leading-4">
        <div>5:29 PM</div>
        <div>12/13/2017</div>
      </div>
      <ShowDesktop />
    </div>
  </footer>
);

export default function App() {
  return (
    <div className="flex h-screen flex-col overflow-hidden bg-white font-['DejaVu_Sans_Condensed','DejaVu_Sans',sans-serif] text-[11px] leading-[14px] text-black">
      <TitleBar />
      <UpdateBanner />
      <SearchBar />

      <div className="flex min-h-0 flex-1 pt-[5px] pb-0.5">
        <Sidebar />
        <main className="flex min-w-0 flex-1 flex-col bg-[#f7f7f7] pl-[3px]">
          <div className="flex h-[29px] shrink-0 bg-white">
            <div className="w-1 border-b border-[#a9a9a9]" />
            <div className="border-t border-r border-l border-[#a9a9a9] bg-[#f7f7f7] px-[7px] pt-0.5">
              <div className="flex h-[22px] items-center gap-[5px] border-b-4 border-[#8513b0] pr-1 whitespace-nowrap">
                <People />
                <button className="pt-0.5 font-bold text-[#0a6dc8]">Candidates-Active</button>
                <button aria-label="Close tab" className="text-[#777]">
                  <svg viewBox="0 0 7 7" className="size-[7px]" stroke="currentColor" aria-hidden="true">
                    <path d="M.5.5l6 6M6.5.5l-6 6" />
                  </svg>
                </button>
              </div>
            </div>
            <div className="flex-1 border-b border-[#a9a9a9]" />
          </div>

          <div className="flex min-h-0 flex-1">
            <section className="flex min-w-0 flex-1 flex-col border-r border-b border-l border-[#a9a9a9] bg-white">
              <Toolbar />
              <div className="min-h-0 flex-1 overflow-hidden">
                <Grid columns={candidateColumns} rows={candidateRows} />
              </div>
              <div className="bg-[#e6e1e6] pb-px">
                <HScroll thumb="w-[363px]" />
              </div>
              <Pager id="candidates-page" items={1} />
            </section>
            <ResumePanel />
          </div>

          <div className="mt-1 flex h-[251px] shrink-0 flex-col">
            <DetailTabs />
            <div className="flex min-h-0 flex-1 pt-px">
              <section className="flex min-w-0 flex-1 flex-col border-b border-l border-[#a9a9a9]">
                <div className="min-h-0 flex-1 overflow-hidden border-r border-[#a9a9a9] bg-white">
                  <Grid columns={documentColumns} rows={documentRows} filler />
                </div>
                <Pager id="documents-page" items={3}>
                  <a href="#" className="ml-[11px] pt-0.5 text-[#0a6dc8] underline">Clear Search</a>
                </Pager>
              </section>
              <DocumentPanel />
            </div>
          </div>
        </main>
      </div>

      <div className="flex h-[25px] shrink-0 items-center justify-between border-t border-[#a9a9a9] bg-[#d6d3ce] px-[5px]">
        <span>12/13/2017 5:29:10 PM: Failed to retrieve reminders.</span>
        <span>CID: cbiz_test2; UID: Test;</span>
      </div>
      <Taskbar />
    </div>
  );
}
